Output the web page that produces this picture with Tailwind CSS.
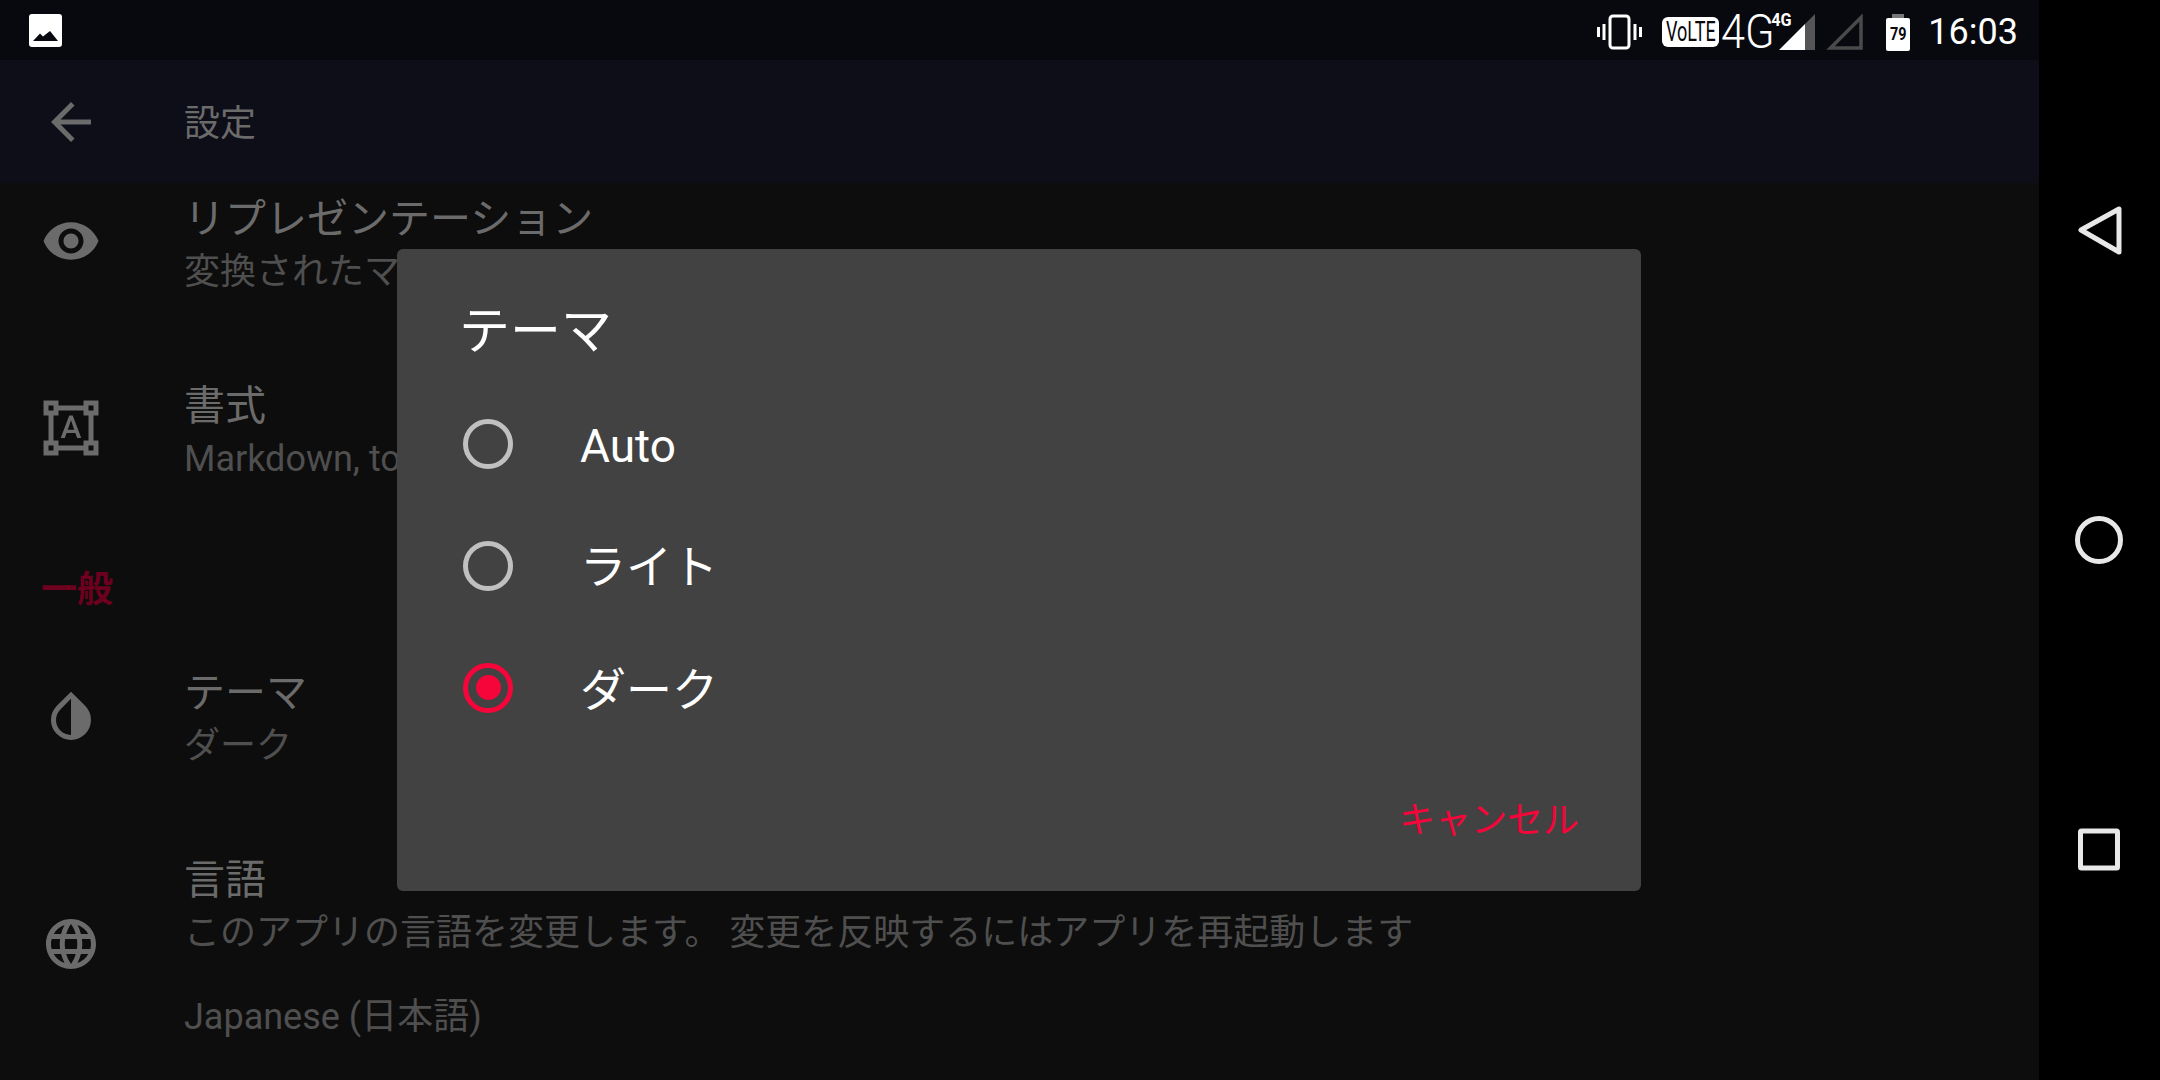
<!DOCTYPE html>
<html lang="ja">
<head>
    <meta charset="UTF-8">
    <title>設定</title>
    <script src="https://cdn.jsdelivr.net/npm/@tailwindcss/browser@4"></script>
</head>
<body class="bg-black font-['Roboto','Noto_Sans_CJK_JP',sans-serif]">
<div class="relative flex w-[2160px] h-[1080px] overflow-hidden">

    <!-- app -->
    <div class="flex flex-col w-[2039px] h-full bg-[#0d0d0d]">

        <!-- status bar -->
        <div class="relative z-10 flex items-center h-[60px] shrink-0 bg-[#08090e] pl-[29px]">
            <svg class="w-[33px] h-[33px]" viewBox="0 0 33 33"><rect width="33" height="33" rx="3" fill="#fff"/><path d="M4 27 11 19.5 14 22.5 21 17 29 27Z" fill="#08090e"/></svg>
            <div class="flex items-center ml-auto pr-[21px] pt-[4px] text-white">
                <svg class="w-[45px] h-[36px]" viewBox="0 0 45 36" fill="none" stroke="#fff"><rect x="13" y="2" width="19" height="32" rx="3" stroke-width="3"/><path d="M7 10v16M1.500 13v10M38 10v16M43.500 13v10" stroke-width="3"/></svg>
                <div class="flex items-center justify-center ml-[20px] w-[57px] h-[30px] rounded-[6px] bg-white text-[#08090e] text-[18px] leading-none"><span class="inline-block scale-y-[1.5] whitespace-nowrap">VoLTE</span></div>
                <span class="ml-[2px] inline-block w-[48px] text-[48px] leading-none font-light whitespace-nowrap origin-left scale-x-[0.9]">4G</span>
                <div class="relative w-[46px] h-[36px]">
                    <span class="absolute left-[1px] top-[-3px] text-[18px] leading-none font-bold scale-x-[0.9]">4G</span>
                    <svg class="absolute left-[10px] top-0 w-[36px] h-[36px]" viewBox="0 0 36 36"><path d="M0 36 26 10V36Z" fill="#fff"/><path d="M26 10 36 0V36H26Z" fill="#555"/></svg>
                </div>
                <svg class="ml-[11px] w-[37px] h-[36px]" viewBox="0 0 37 36" fill="none"><path d="M4.500 34 35 3.500V34Z" stroke="#4a4a4a" stroke-width="3.500"/></svg>
                <div class="relative ml-[23px] w-[24px] h-[37px]">
                    <div class="mx-auto w-[12px] h-[4px] bg-[#777]"></div>
                    <div class="h-[33px] rounded-[2px] bg-white text-center text-[#08090e] text-[18px] leading-[31px] font-bold"><span class="inline-block scale-x-[0.8]">79</span></div>
                </div>
                <span class="ml-[18px] text-[36px] leading-none">16:03</span>
            </div>
        </div>

        <!-- toolbar -->
        <div class="relative z-10 flex items-center h-[123px] shrink-0 bg-[#0d0e18]">
            <div class="flex justify-center w-[142px] shrink-0">
                <svg class="w-[60px] h-[60px] fill-[#6b6b6b]" viewBox="0 0 24 24"><path d="M20 11H7.830l5.590-5.590L12 4l-8 8 8 8 1.410-1.410L7.830 13H20v-2z"/></svg>
            </div>
            <span class="ml-[42px] mt-[5px] text-[36px] text-[#6b6b6b]">設定</span>
        </div>

        <!-- settings list -->
        <div class="flex flex-col -mt-[33px]">
            <div class="flex items-center h-[187px] shrink-0">
                <div class="flex justify-center w-[142px] shrink-0 -mt-[5px]">
                    <svg class="w-[60px] h-[60px] fill-[#6b6b6b]" viewBox="0 0 24 24"><path d="M12 4.500C7 4.500 2.730 7.610 1 12c1.730 4.390 6 7.500 11 7.500s9.270-3.110 11-7.500c-1.730-4.390-6-7.500-11-7.500zM12 17c-2.760 0-5-2.240-5-5s2.240-5 5-5 5 2.240 5 5-2.240 5-5 5zm0-8c-1.660 0-3 1.340-3 3s1.340 3 3 3 3-1.340 3-3-1.340-3-3-3z"/></svg>
                </div>
                <div class="ml-[42px] mt-[4px]">
                    <div class="text-[41px] leading-[53px] text-[#6b6b6b]">リプレゼンテーション</div>
                    <div class="text-[36px] leading-[53px] text-[#4f4f4f]">変換されたマークダウン</div>
                </div>
            </div>
            <div class="flex items-center h-[187px] shrink-0">
                <div class="flex justify-center w-[142px] shrink-0 -mt-[5px]">
                    <svg class="w-[60px] h-[60px] fill-[#6b6b6b]" viewBox="0 0 24 24"><path d="M23 7V1h-6v2H7V1H1v6h2v10H1v6h6v-2h10v2h6v-6h-2V7h2zM3 3h2v2H3V3zm2 18H3v-2h2v2zm12-2H7v-2H5V7h2V5h10v2h2v10h-2v2zm4 2h-2v-2h2v2zM19 5V3h2v2h-2zm-5.270 9h-3.490l-.73 2H7.890l3.400-9h1.400l3.410 9h-1.630l-.74-2zm-3.040-1.260h2.610L12 8.910l-1.310 3.830z"/></svg>
                </div>
                <div class="ml-[42px] mt-[4px]">
                    <div class="text-[41px] leading-[53px] text-[#6b6b6b]">書式</div>
                    <div class="text-[36px] leading-[53px] text-[#4f4f4f]">Markdown, todo.txt</div>
                </div>
            </div>
            <div class="h-[101px] shrink-0 pt-[40px] pl-[41px] text-[36px] leading-[53px] font-semibold text-[#6e001f]">一般</div>
            <div class="flex items-center h-[187px] shrink-0">
                <div class="flex justify-center w-[142px] shrink-0 -mt-[5px]">
                    <svg class="w-[60px] h-[60px] fill-[#6b6b6b]" viewBox="0 0 24 24"><path d="M17.660 7.930L12 2.270 6.340 7.930c-3.120 3.120-3.120 8.190 0 11.310C7.900 20.800 9.950 21.580 12 21.580c2.050 0 4.100-.78 5.660-2.340 3.120-3.120 3.120-8.190 0-11.310zM12 19.590c-1.600 0-3.110-.62-4.240-1.760C6.620 16.690 6 15.190 6 13.590s.62-3.110 1.760-4.240L12 5.100v14.490z"/></svg>
                </div>
                <div class="ml-[42px] mt-[2px]">
                    <div class="text-[41px] leading-[53px] text-[#6b6b6b]">テーマ</div>
                    <div class="text-[36px] leading-[53px] text-[#4f4f4f]">ダーク</div>
                </div>
            </div>
            <div class="flex items-center pt-[42px]">
                <div class="flex justify-center w-[142px] shrink-0 -mt-[11px]">
                    <svg class="w-[60px] h-[60px] fill-[#6b6b6b]" viewBox="0 0 24 24"><path d="M11.990 2C6.470 2 2 6.480 2 12s4.470 10 9.990 10C17.520 22 22 17.520 22 12S17.520 2 11.990 2zm6.930 6h-2.950c-.32-1.250-.78-2.450-1.380-3.560 1.840.63 3.370 1.910 4.330 3.560zM12 4.040c.83 1.200 1.480 2.530 1.910 3.960h-3.820c.43-1.430 1.080-2.760 1.910-3.960zM4.260 14C4.100 13.360 4 12.690 4 12s.1-1.360.26-2h3.380c-.08.66-.14 1.320-.14 2 0 .68.06 1.340.14 2H4.260zm.82 2h2.950c.32 1.250.78 2.450 1.380 3.560-1.840-.63-3.370-1.900-4.330-3.560zm2.950-8H5.080c.96-1.660 2.490-2.930 4.330-3.560C8.810 5.550 8.350 6.750 8.030 8zM12 19.960c-.83-1.200-1.480-2.530-1.910-3.960h3.820c-.43 1.430-1.080 2.760-1.910 3.960zM14.340 14H9.660c-.09-.66-.16-1.320-.16-2 0-.68.07-1.350.16-2h4.680c.09.65.16 1.320.16 2 0 .68-.07 1.340-.16 2zm.25 5.560c.6-1.110 1.060-2.310 1.380-3.560h2.950c-.96 1.650-2.490 2.930-4.330 3.560zM16.360 14c.08-.66.14-1.320.14-2 0-.68-.06-1.340-.14-2h3.380c.16.64.26 1.310.26 2s-.1 1.360-.26 2h-3.380z"/></svg>
                </div>
                <div class="ml-[42px]">
                    <div class="text-[41px] leading-[53px] text-[#6b6b6b]">言語</div>
                    <div class="text-[36px] leading-[53px] text-[#4f4f4f] whitespace-nowrap">このアプリの言語を変更します。 変更を反映するにはアプリを再起動します</div>
                    <div class="mt-[31px] text-[36px] leading-[53px] text-[#4f4f4f]">Japanese (日本語)</div>
                </div>
            </div>
        </div>
    </div>

    <!-- navigation bar -->
    <div class="flex flex-col items-center justify-center gap-[250px] w-[121px] h-full bg-black">
        <svg class="w-[60px] h-[60px]" viewBox="0 0 60 60" fill="none" stroke="#e8e8e8" stroke-width="5" stroke-linejoin="round"><path d="M11 30 49 9V52Z"/></svg>
        <svg class="w-[60px] h-[60px]" viewBox="0 0 60 60" fill="none" stroke="#e8e8e8" stroke-width="5"><circle cx="29" cy="30" r="21.500"/></svg>
        <svg class="w-[60px] h-[60px]" viewBox="0 0 60 60" fill="none" stroke="#e8e8e8" stroke-width="5" stroke-linejoin="round"><rect x="10.500" y="11" width="37" height="37" rx="1"/></svg>
    </div>

    <!-- theme dialog -->
    <div class="absolute left-[397px] top-[249px] flex flex-col w-[1244px] h-[642px] rounded-[6px] bg-[#424242] text-white">
        <div class="h-[133px] shrink-0 pt-[50px] pl-[62px] text-[51px] leading-[66px]">テーマ</div>
        <div class="flex items-center h-[122px] pl-[66px]">
            <span class="mt-[1px] w-[50px] h-[50px] rounded-full border-[5px] border-[#c0c0c0]"></span>
            <span class="ml-[67px] mt-[7px] text-[46px]">Auto</span>
        </div>
        <div class="flex items-center h-[122px] pl-[66px]">
            <span class="mt-[1px] w-[50px] h-[50px] rounded-full border-[5px] border-[#c0c0c0]"></span>
            <span class="ml-[67px] mt-[5px] text-[46px]">ライト</span>
        </div>
        <div class="flex items-center h-[122px] pl-[66px]">
            <span class="flex items-center justify-center mt-[1px] w-[50px] h-[50px] rounded-full border-[5px] border-[#f50539]"><span class="w-[25px] h-[25px] rounded-full bg-[#f50539]"></span></span>
            <span class="ml-[67px] mt-[6px] text-[46px]">ダーク</span>
        </div>
        <div class="flex justify-end pt-[47px] pr-[62px] text-[36px] leading-[53px] text-[#f50539]">キャンセル</div>
    </div>
</div>
</body>
</html>
